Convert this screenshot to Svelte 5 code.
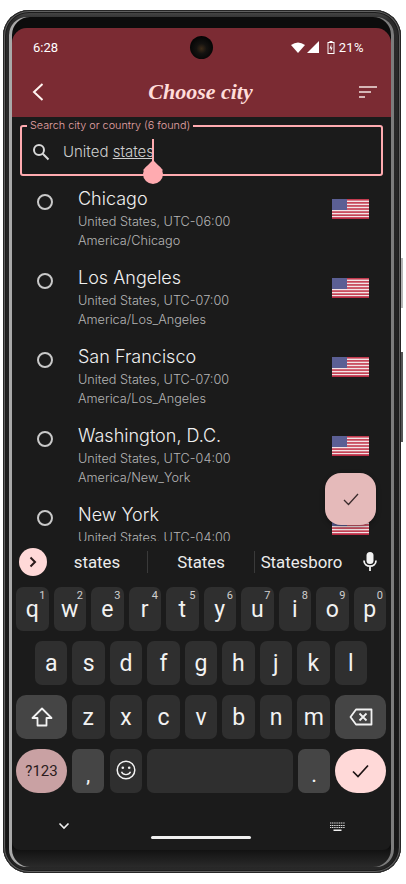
<script>
	const cities = [
		{ name: 'Chicago', info: 'United States, UTC-06:00', zone: 'America/Chicago' },
		{ name: 'Los Angeles', info: 'United States, UTC-07:00', zone: 'America/Los_Angeles' },
		{ name: 'San Francisco', info: 'United States, UTC-07:00', zone: 'America/Los_Angeles' },
		{ name: 'Washington, D.C.', info: 'United States, UTC-04:00', zone: 'America/New_York' },
		{ name: 'New York', info: 'United States, UTC-04:00', zone: 'America/New_York' }
	];
	const topRow = 'qwertyuiop'.split('');
	const midRow = 'asdfghjkl'.split('');
	const lowRow = 'zxcvbnm'.split('');
	const stripes = [0, 1, 2, 3, 4, 5, 6];
</script>

<div class="device">
	<div class="bezel">
		<div class="screen">
			<header class="appbar">
				<div class="status">
					<span class="time">6:28</span>
					<span class="camera"></span>
					<div class="status-right">
						<svg width="14" height="11" viewBox="0 0 14 11"><path d="M0 3 Q7 -2 14 3 L7 11 Z" fill="#fff" /></svg>
						<svg width="12" height="12" viewBox="0 0 12 12"><path d="M12 0 V12 H0 Z" fill="#fff" /></svg>
						<svg class="battery" width="8" height="13" viewBox="0 0 8 13">
							<path d="M2.5 0 H5.5 V1 H7.5 V13 H0.5 V1 H2.5 Z" fill="#fff" />
							<rect x="1.5" y="2" width="5" height="10" fill="#7b2b33" />
							<path d="M4.4 3 L2.5 7.5 H3.8 V10.5 L5.6 6.5 H4.3 Z" fill="#fff" />
						</svg>
						<span>21%</span>
					</div>
				</div>
				<div class="toolbar">
					<svg width="12" height="18" viewBox="0 0 12 18"><path d="M10.5 1 L2 9 L10.5 17" fill="none" stroke="#fff3f0" stroke-width="2" /></svg>
					<h1>Choose city</h1>
					<svg width="18" height="12" viewBox="0 0 18 12"><path d="M0 1 H18 M0 6 H12 M0 11 H6" stroke="#d6b6b6" stroke-width="2" /></svg>
				</div>
			</header>

			<div class="search">
				<span class="search-label">Search city or country (6 found)</span>
				<svg width="18" height="18" viewBox="0 0 18 18">
					<circle cx="7" cy="7" r="5" fill="none" stroke="#d8d8d8" stroke-width="2" />
					<path d="M10.8 10.8 L16.5 16.5" stroke="#d8d8d8" stroke-width="2" />
				</svg>
				<span class="query">United <u>states</u></span>
				<span class="cursor"></span>
				<span class="handle"></span>
			</div>

			<div class="list">
				{#each cities as city}
					<div class="city">
						<span class="radio"></span>
						<div class="city-text">
							<div class="city-name">{city.name}</div>
							<div class="city-sub">{city.info}</div>
							<div class="city-sub">{city.zone}</div>
						</div>
						<svg class="flag" width="37" height="20" viewBox="0 0 37 20">
							<rect width="37" height="20" fill="#f3e4e6" />
							{#each stripes as i}
								<rect y={i * 3.07} width="37" height="1.6" fill="#c33a4e" />
							{/each}
							<rect y="18.4" width="37" height="1.6" fill="#b92c44" />
							<rect width="15" height="11" fill="#5b5f94" />
						</svg>
					</div>
				{/each}
				<button class="fab" aria-label="Confirm">
					<svg width="16" height="13" viewBox="0 0 16 13"><path d="M1 7 L5.5 11.5 L15 1" fill="none" stroke="#3a2b2c" stroke-width="1.3" /></svg>
				</button>
			</div>

			<div class="keyboard">
				<div class="suggestions">
					<span class="expand">
						<svg width="8" height="12" viewBox="0 0 8 12"><path d="M1.5 1.5 L6 6 L1.5 10.5" fill="none" stroke="#2a1a1a" stroke-width="2" /></svg>
					</span>
					<span class="word first">states</span>
					<i></i>
					<span class="word second">States</span>
					<i></i>
					<span class="word third">Statesboro</span>
					<svg class="mic" width="14" height="20" viewBox="0 0 14 20">
						<rect x="3.5" y="0" width="7" height="12" rx="3.5" fill="#f2f2f2" />
						<path d="M1 8.5 C1 16 13 16 13 8.5 M7 14 V19" fill="none" stroke="#f2f2f2" stroke-width="1.8" />
					</svg>
				</div>

				<div class="row">
					{#each topRow as k, i}
						<div class="key">{k}<sup>{(i + 1) % 10}</sup></div>
					{/each}
				</div>
				<div class="row mid">
					{#each midRow as k}
						<div class="key">{k}</div>
					{/each}
				</div>
				<div class="row">
					<div class="key fn wide">
						<svg width="22" height="20" viewBox="0 0 22 20"><path d="M11 1.5 L20.5 11 H15.5 V18.5 H6.5 V11 H1.5 Z" fill="none" stroke="#f2f2f2" stroke-width="1.8" stroke-linejoin="round" /></svg>
					</div>
					{#each lowRow as k}
						<div class="key">{k}</div>
					{/each}
					<div class="key fn wide">
						<svg width="24" height="18" viewBox="0 0 24 18">
							<path d="M7 1.5 H22.5 V16.5 H7 L1.5 9 Z" fill="none" stroke="#f2f2f2" stroke-width="1.8" stroke-linejoin="round" />
							<path d="M10.5 5.5 L17.5 12.5 M17.5 5.5 L10.5 12.5" stroke="#f2f2f2" stroke-width="1.8" />
						</svg>
					</div>
				</div>
				<div class="row bottom">
					<div class="key wide symbols">?123</div>
					<div class="key fn punct">,</div>
					<div class="key emoji">
						<svg width="20" height="20" viewBox="0 0 20 20">
							<circle cx="10" cy="10" r="8.8" fill="none" stroke="#f2f2f2" stroke-width="1.5" />
							<circle cx="6.8" cy="7.8" r="1.3" fill="#f2f2f2" />
							<circle cx="13.2" cy="7.8" r="1.3" fill="#f2f2f2" />
							<path d="M5.5 11.8 C7 15.5 13 15.5 14.5 11.8" fill="none" stroke="#f2f2f2" stroke-width="1.4" />
						</svg>
					</div>
					<div class="key space"></div>
					<div class="key fn punct">.</div>
					<div class="key wide enter">
						<svg width="17" height="14" viewBox="0 0 17 14"><path d="M1 7.5 L6 12.5 L16 1.5" fill="none" stroke="#1e1414" stroke-width="1.7" /></svg>
					</div>
				</div>

				<div class="navbar">
					<svg width="12" height="8" viewBox="0 0 12 8"><path d="M1.5 1.5 L6 6 L10.5 1.5" fill="none" stroke="#f0f0f0" stroke-width="1.6" /></svg>
					<span class="pill"></span>
					<svg width="15" height="9" viewBox="0 0 15 9"><path d="M0 1 H15 M0 3.5 H15 M0 5.5 H15" stroke="#e0e0e0" stroke-width="1" stroke-dasharray="1.2 .6" /><path d="M3.5 8.2 H11.5" stroke="#f0f0f0" stroke-width="1.4" /></svg>
				</div>
			</div>
		</div>
	</div>
	<span class="side-btn power"></span>
	<span class="side-btn volume"></span>
</div>

<style>
	:global(body) {
		background: #fff;
	}
	.device {
		position: relative;
		box-sizing: border-box;
		width: 398px;
		height: 863px;
		margin: 10px 0 0 3px;
		padding: 7px 7px 6px 6px;
		border-radius: 26px;
		background: linear-gradient(#4e4e4e, #2a2a2a 1.2%, #161616 97%, #2c2c2c);
		box-shadow: inset 0 0 0 1px #262626, inset 0 0 0 2px #5f5f5f, inset 0 0 0 3px #1c1c1c;
		font-family: Inter, 'Noto Sans', sans-serif;
	}
	.bezel {
		box-sizing: border-box;
		height: 100%;
		padding: 11px 3px 17px;
		border-radius: 18px;
		background: linear-gradient(#0c0c0c 97.5%, #2a2a2a);
		box-shadow: inset 3px 0 0 #a9a9a9, inset -3px 0 0 #7c7c7c;
	}
	.screen {
		display: flex;
		flex-direction: column;
		height: 100%;
		border-radius: 15px 15px 8px 8px;
		overflow: hidden;
		background: #1b1b1b;
	}
	.appbar {
		flex: none;
		height: 89px;
		background: #7b2b33;
		color: #fff;
	}
	.status {
		position: relative;
		display: flex;
		justify-content: space-between;
		align-items: center;
		height: 38px;
		padding: 0 27px 0 21px;
		font-family: Roboto, sans-serif;
		font-size: 13px;
	}
	.status-right {
		display: flex;
		align-items: center;
		gap: 2px;
		letter-spacing: 0.4px;
	}
	.battery {
		margin: 0 2px 0 6px;
	}
	.camera {
		position: absolute;
		left: 178px;
		top: 8px;
		width: 23px;
		height: 23px;
		border-radius: 50%;
		background: radial-gradient(circle at 50% 55%, #3b2a18 0, #141210 30%, #050505 70%);
	}
	.toolbar {
		display: flex;
		justify-content: space-between;
		align-items: center;
		height: 38px;
		margin-top: 7px;
		padding: 0 14px 0 20px;
	}
	h1 {
		margin: 0 0 0 -2px;
		font-family: 'Liberation Serif', serif;
		font-size: 22px;
		font-weight: 700;
		font-style: italic;
		color: #ffdcd9;
	}
	.search {
		position: relative;
		flex: none;
		display: flex;
		align-items: center;
		gap: 13px;
		box-sizing: border-box;
		height: 51px;
		margin: 8px 8px 0;
		padding: 2px 10px 0;
		border: 2px solid #ffabb0;
		border-radius: 3px;
	}
	.search-label {
		position: absolute;
		left: 5px;
		top: -8px;
		padding: 0 3px;
		background: #1b1b1b;
		font-size: 10.8px;
		font-weight: 300;
		color: #e6a6a8;
		white-space: nowrap;
	}
	.query {
		font-size: 15px;
		font-weight: 300;
		color: #cfcfcf;
	}
	.cursor {
		position: absolute;
		left: 130px;
		top: 12px;
		width: 2px;
		height: 24px;
		background: #ffabb0;
	}
	.handle {
		position: absolute;
		left: 121px;
		top: 37px;
		width: 20px;
		height: 20px;
		border-radius: 50%;
		background: #ffabb0;
		z-index: 2;
	}
	.handle::before {
		content: '';
		position: absolute;
		left: 3px;
		top: -1px;
		width: 14px;
		height: 14px;
		background: #ffabb0;
		transform: rotate(45deg);
	}
	.list {
		position: relative;
		flex: 1;
		min-height: 0;
		overflow: hidden;
	}
	.city {
		display: flex;
		align-items: flex-start;
		height: 79px;
		box-sizing: border-box;
		padding: 11px 22px 0 25px;
	}
	.radio {
		flex: none;
		box-sizing: border-box;
		width: 16px;
		height: 16px;
		margin-top: 7px;
		border: 2px solid #c9c9c9;
		border-radius: 50%;
	}
	.city-text {
		flex: 1;
		margin-left: 25px;
	}
	.city-name {
		margin-bottom: 1px;
		font-size: 18px;
		line-height: 24px;
		font-weight: 300;
		color: #f0f0f0;
	}
	.city-sub {
		font-size: 12.7px;
		line-height: 19px;
		font-weight: 300;
		color: #b4b4b4;
	}
	.flag {
		flex: none;
		margin-top: 12px;
	}
	.fab {
		position: absolute;
		right: 15px;
		top: 297px;
		width: 51px;
		height: 52px;
		display: flex;
		align-items: center;
		justify-content: center;
		padding: 0;
		border: none;
		border-radius: 16px;
		background: #e5baba;
		box-shadow: 0 2px 5px rgba(0, 0, 0, 0.35);
	}
	.keyboard {
		flex: none;
		height: 309px;
		font-family: Roboto, sans-serif;
		color: #f2f2f2;
	}
	.suggestions {
		display: flex;
		align-items: center;
		height: 41px;
		padding: 0 14px 0 7px;
		margin-bottom: 5px;
		font-size: 16.8px;
		color: #ececec;
	}
	.expand {
		flex: none;
		display: flex;
		align-items: center;
		justify-content: center;
		width: 28px;
		height: 28px;
		border-radius: 50%;
		background: #ffd9d8;
	}
	.word {
		flex: none;
		text-align: center;
	}
	.first {
		width: 100px;
	}
	.second {
		width: 106px;
	}
	.third {
		width: 93px;
	}
	.suggestions i {
		flex: none;
		width: 1px;
		height: 22px;
		background: #3a3a3a;
	}
	.mic {
		flex: none;
		margin-left: 15px;
	}
	.row {
		display: flex;
		gap: 5px;
		height: 44px;
		margin: 0 5px 10px 4px;
	}
	.row.mid {
		margin: 0 24px 10px 23px;
	}
	.row.bottom {
		gap: 5.3px;
	}
	.key {
		position: relative;
		flex: 1;
		display: flex;
		align-items: center;
		justify-content: center;
		border-radius: 7px;
		background: #2f2f2f;
		font-size: 23px;
	}
	.key sup {
		position: absolute;
		right: 3px;
		top: 2px;
		font-size: 11px;
		line-height: 13px;
		color: #cfcfcf;
	}
	.fn {
		background: #454545;
	}
	.wide {
		flex: none;
		width: 51px;
		border-radius: 10px;
	}
	.bottom .key {
		flex: none;
		width: 32px;
	}
	.bottom .wide {
		width: 51px;
		border-radius: 22px;
	}
	.bottom .space {
		width: 146px;
	}
	.punct {
		align-items: flex-end;
		padding-bottom: 8px;
		box-sizing: border-box;
		font-size: 16px;
		font-weight: 700;
		line-height: 16px;
	}
	.emoji {
		padding-bottom: 3px;
		box-sizing: border-box;
	}
	.symbols {
		background: #c9a1a3;
		color: #2b1c1d;
		font-size: 15px;
	}
	.enter {
		background: #ffd9d8;
	}
	.navbar {
		display: flex;
		justify-content: space-between;
		align-items: flex-start;
		padding: 19px 46px 0;
	}
	.pill {
		width: 100px;
		height: 3px;
		margin: 14px 0 0 2px;
		border-radius: 2px;
		background: #f0f0f0;
	}
	.side-btn {
		position: absolute;
		right: -2px;
		width: 2px;
	}
	.power {
		top: 248px;
		height: 50px;
		background: #b5b5b5;
	}
	.volume {
		top: 342px;
		height: 90px;
		background: #555;
	}
</style>
